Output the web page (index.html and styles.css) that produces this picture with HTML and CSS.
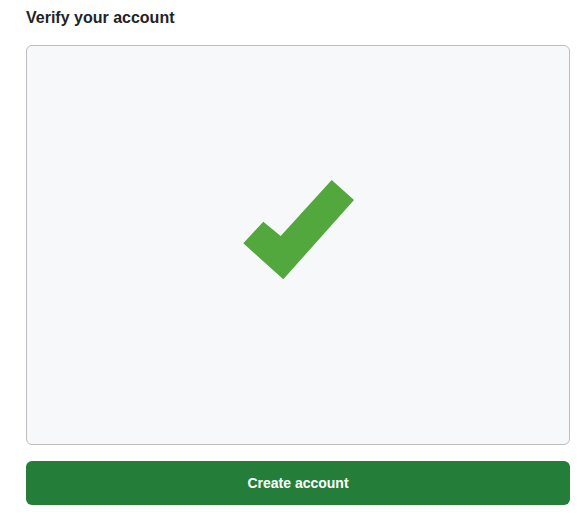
FILE: index.html
```html
<!DOCTYPE html>
<html lang="en">
<head>
<meta charset="utf-8">
<title>Verify your account</title>
<link rel="stylesheet" href="styles.css">
</head>
<body>
<main class="page">
  <h2 class="title">Verify your account</h2>
  <div class="captcha">
    <svg class="check" width="112" height="100" viewBox="0 0 112 100" aria-hidden="true">
      <polygon fill="#52a73d" points="88.7,0 111,20 40.3,99.3 0.3,63.3 20.3,41.7 37.7,56"/>
    </svg>
  </div>
  <button class="btn-primary" type="button">Create account</button>
</main>
</body>
</html>
```

FILE: styles.css
```css
html, body {
  margin: 0;
  padding: 0;
  background: #ffffff;
}

.page {
  width: 544px;
  padding: 6px 0 0 26px;
  display: flex;
  flex-direction: column;
  font-family: "Liberation Sans", Arial, sans-serif;
  color: #1f2328;
}

.title {
  margin: 0 0 15px;
  font-size: 16px;
  line-height: 24px;
  font-weight: 700;
}

.captcha {
  box-sizing: border-box;
  height: 400px;
  border: 1px solid #bdbdbd;
  border-radius: 6px;
  background: #f6f8fa;
  display: flex;
  justify-content: center;
  align-items: flex-start;
  padding-top: 134px;
}

.check {
  display: block;
  margin-left: 1px;
}

.btn-primary {
  margin-top: 16px;
  height: 44px;
  border: 0;
  border-radius: 6px;
  background: #257d3a;
  color: #ffffff;
  font-family: "Liberation Sans", Arial, sans-serif;
  font-size: 14px;
  font-weight: 700;
  cursor: pointer;
}
```
